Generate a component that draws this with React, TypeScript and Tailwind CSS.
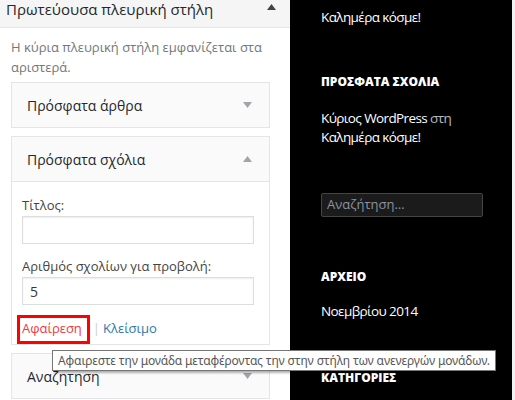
import React from 'react';

function Arrow({ up, className }: { up?: boolean; className?: string }) {
  return (
    <svg className={className} width="9" height="6" viewBox="0 0 9 6">
      {up ? <path d="M0 6 L4.5 0 L9 6 Z" fill="currentColor" /> : <path d="M0 0 L9 0 L4.5 6 Z" fill="currentColor" />}
    </svg>
  );
}

function WidgetTitle({ title, open }: { title: string; open?: boolean }) {
  return (
    <div className="flex h-[44px] items-center justify-between pl-[15px] pr-[17px] text-[14px] text-[#23282d]">
      <span>{title}</span>
      <Arrow up={open} className="text-[#a0a5aa]" />
    </div>
  );
}

function Field({ label, value }: { label: string; value?: string }) {
  return (
    <div className="flex flex-col">
      <label className="text-[13px] leading-[20px] text-[#444]">{label}</label>
      <div className="mt-[1px] flex h-[28px] w-[232px] items-center border border-[#ddd] bg-white px-[7px] text-[14px] text-[#32373c] shadow-[inset_0_1px_2px_rgba(0,0,0,0.07)]">
        {value}
      </div>
    </div>
  );
}

export default function App() {
  return (
    <div className="relative flex h-[400px] w-[515px] overflow-hidden bg-[#f1f1f1] font-['Open_Sans',sans-serif]">
      <div className="flex w-[290px] flex-col bg-white">
        <div className="flex h-[28px] shrink-0 items-start justify-between border-b border-[#e5e5e5] bg-[#f5f5f5] pl-[6px] pr-[14px]">
          <span className="-mt-[1px] text-[15px] leading-[20px] text-[#23282d]">Πρωτεύουσα πλευρική στήλη</span>
          <Arrow up className="mt-[4px] text-[#444]" />
        </div>
        <div className="px-[11px] pt-[9px]">
          <p className="w-[255px] text-[13px] leading-[20px] text-[#72777c]">
            Η κύρια πλευρική στήλη εμφανίζεται στα αριστερά.
          </p>
          <div className="mt-[5px] w-[259px] border border-[#e5e5e5] bg-[#fafafa]">
            <WidgetTitle title="Πρόσφατα άρθρα" />
          </div>
          <div className="mt-[8px] w-[259px] border border-[#e5e5e5] bg-[#fafafa]">
            <WidgetTitle title="Πρόσφατα σχόλια" open />
            <div className="border-t border-[#e5e5e5] bg-white pl-[10px] pt-[13px]">
              <div className="flex flex-col gap-[12px]">
                <Field label="Τίτλος:" />
                <Field label="Αριθμός σχολίων για προβολή:" value="5" />
              </div>
              <div className="mt-[10px] flex h-[29px] items-center pb-[1px] text-[13px]">
                <span className="-ml-[5px] flex h-[29px] items-center border-[3px] border-[#ff0000] pl-[2px] pr-[5px] text-[#f0393f]">
                  Αφαίρεση
                </span>
                <span className="mx-[3px] text-[#ccc]">|</span>
                <span className="text-[#2e78a8]">Κλείσιμο</span>
              </div>
            </div>
          </div>
          <div className="mt-[8px] w-[259px] border border-[#e5e5e5] bg-[#fafafa]">
            <WidgetTitle title="Αναζητηση" />
          </div>
        </div>
      </div>

      <div className="flex w-[222px] flex-col bg-black pl-[31px] text-white">
        <span className="mt-[8px] text-[13.5px] leading-[19px] tracking-[-0.6px]">Καλημέρα κόσμε!</span>
        <h3 className="mt-[48px] text-[12px] font-black leading-[14px]">ΠΡΟΣΦΑΤΑ ΣΧΟΛΙΑ</h3>
        <p className="mt-[20px] text-[13.5px] leading-[19px] tracking-[-0.6px]">
          Κύριος WordPress <span className="text-[#bbb]">στη</span>
          <br />
          Καλημέρα κόσμε!
        </p>
        <div className="mt-[46px] flex h-[24px] w-[162px] items-center rounded-[2px] border border-[#444] bg-[#1b1b1b] px-[5px] text-[13px] text-[#8b93a0]">
          Αναζήτηση…
        </div>
        <h3 className="mt-[53px] text-[12px] font-black leading-[14px]">ΑΡΧΕΙΟ</h3>
        <span className="mt-[18px] text-[13.5px] leading-[19px] tracking-[-0.6px]">Νοεμβρίου 2014</span>
        <h3 className="mt-[50px] text-[12px] font-black leading-[14px]">ΚΑΤΗΓΟΡΙΕΣ</h3>
      </div>

      <div className="absolute left-[52px] top-[350px] flex h-[21px] items-center border border-[#767676] bg-white px-[5px] font-['Noto_Sans',sans-serif] text-[12px] tracking-[-0.15px] text-[#575757] shadow-[2px_2px_2px_rgba(0,0,0,0.3)]">
        Αφαιρεστε την μονάδα μεταφέροντας την στην στήλη των ανενεργών μονάδων.
      </div>
    </div>
  );
}
